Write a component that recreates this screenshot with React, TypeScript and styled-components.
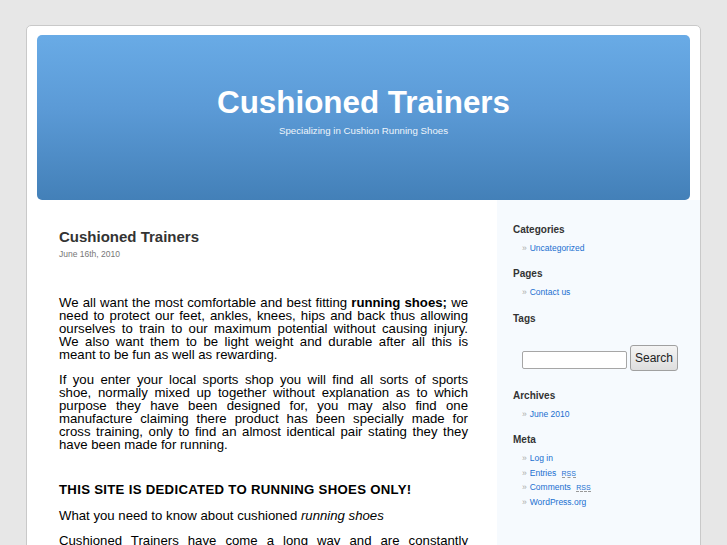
import styled, { createGlobalStyle } from "styled-components";

const GlobalStyle = createGlobalStyle`
  html, body {
    margin: 0;
    padding: 0;
    background: #e7e7e7;
    font-family: "Liberation Sans", Arial, sans-serif;
    color: #333;
  }
  body {
    padding-top: 25px;
    overflow: hidden;
  }
`;

const Page = styled.div`
  width: 673px;
  margin: 0 auto;
  background: #fff;
  border: 1px solid #c9c9c9;
  border-radius: 5px;
  overflow: hidden;
  min-height: 600px;
  display: flex;
  flex-direction: column;
`;

const Header = styled.header`
  margin: 9px 10px 0 10px;
  height: 165px;
  border-radius: 5px;
  background: linear-gradient(180deg, #69abe6 0%, #5b9ad6 45%, #4380b8 100%);
  display: flex;
  flex-direction: column;
  align-items: center;
  color: #fff;
`;

const SiteTitle = styled.h1`
  margin: 51px 0 0 0;
  font-size: 31.4px;
  line-height: 34px;
  font-weight: bold;
`;

const SiteDescription = styled.div`
  margin-top: 5px;
  font-size: 9.7px;
  line-height: 12px;
  color: #eef4fb;
`;

const Body = styled.div`
  display: flex;
  flex: 1;
`;

const Main = styled.main`
  width: 409px;
  padding: 28px 29px 0 32px;
`;

const PostTitle = styled.h2`
  margin: 0;
  font-size: 15px;
  line-height: 18px;
  font-weight: bold;
  color: #333;
`;

const PostDate = styled.small`
  display: block;
  margin-top: 3px;
  font-size: 8.5px;
  line-height: 10px;
  color: #777;
`;

const Entry = styled.div`
  margin-top: 37px;
  color: #000;
  font-size: 13.2px;
  line-height: 13px;
`;

const Para = styled.p<{ $gap?: number }>`
  margin: ${(p) => p.$gap ?? 12}px 0 0 0;
`;

// one rendered line of a justified paragraph, so the breaks stay where they are
const Line = styled.span<{ $last?: boolean }>`
  display: block;
  white-space: nowrap;
  text-align: ${(p) => (p.$last ? "left" : "justify")};
  text-align-last: ${(p) => (p.$last ? "left" : "justify")};
`;

const Shout = styled.h3`
  margin: 32px 0 0 0;
  font-size: 13.2px;
  line-height: 13px;
  letter-spacing: 0.3px;
  font-weight: bold;
  color: #000;
`;

const Sidebar = styled.aside`
  flex: 1;
  background: #f6fafe;
  padding: 24px 16px 0 16px;
`;

const WidgetTitle = styled.h2<{ $top?: number }>`
  margin: ${(p) => p.$top ?? 0}px 0 0 0;
  font-size: 10px;
  line-height: 12px;
  font-weight: bold;
  color: #333;
`;

const List = styled.ul`
  list-style: none;
  margin: 5px 0 0 9px;
  padding: 0;
`;

const Item = styled.li`
  font-size: 8.5px;
  line-height: 14.7px;
  height: 14.7px;
  color: #999;
  &::before {
    content: "»";
    margin-right: 3px;
    color: #aaa;
  }
`;

const Link = styled.a`
  color: #1a6fd0;
  text-decoration: none;
`;

const Abbr = styled.abbr`
  font-size: 7px;
  line-height: 1;
  text-decoration: none;
  border-bottom: 1px dashed #999;
  margin-left: 3px;
`;

const SearchForm = styled.form`
  display: flex;
  align-items: flex-end;
  gap: 3px;
  margin: 20px 0 0 9px;
`;

const SearchInput = styled.input`
  box-sizing: border-box;
  width: 105px;
  height: 18px;
  margin-bottom: 2px;
  border: 1px solid #a6a6a6;
  border-radius: 2px;
  background: #fff;
  padding: 0 3px;
`;

const SearchButton = styled.button`
  box-sizing: border-box;
  width: 48px;
  height: 26px;
  border: 1px solid #a0a0a0;
  border-radius: 3px;
  background: linear-gradient(180deg, #f4f4f4 0%, #dedede 100%);
  font-family: "Liberation Sans", Arial, sans-serif;
  font-size: 12px;
  color: #222;
  padding: 0;
`;

export default function App() {
  return (
    <>
      <GlobalStyle />
      <Page>
        <Header>
          <SiteTitle>Cushioned Trainers</SiteTitle>
          <SiteDescription>Specializing in Cushion Running Shoes</SiteDescription>
        </Header>
        <Body>
          <Main>
            <PostTitle>Cushioned Trainers</PostTitle>
            <PostDate>June 16th, 2010</PostDate>
            <Entry>
              <Para $gap={0}>
                <Line>We all want the most comfortable and best fitting <strong>running shoes;</strong> we</Line>
                <Line>need to protect our feet, ankles, knees, hips and back thus allowing</Line>
                <Line>ourselves to train to our maximum potential without causing injury.</Line>
                <Line>We also want them to be light weight and durable after all this is</Line>
                <Line $last>meant to be fun as well as rewarding.</Line>
              </Para>
              <Para>
                <Line>If you enter your local sports shop you will find all sorts of sports</Line>
                <Line>shoe, normally mixed up together without explanation as to which</Line>
                <Line>purpose they have been designed for, you may also find one</Line>
                <Line>manufacture claiming there product has been specially made for</Line>
                <Line>cross training, only to find an almost identical pair stating they they</Line>
                <Line $last>have been made for running.</Line>
              </Para>
              <Shout>THIS SITE IS DEDICATED TO RUNNING SHOES ONLY!</Shout>
              <Para $gap={13}>
                <Line $last>What you need to know about cushioned <em>running shoes</em></Line>
              </Para>
              <Para>
                <Line>Cushioned Trainers have come a long way and are constantly</Line>
                <Line $last>being improved by the manufacturers.</Line>
              </Para>
            </Entry>
          </Main>
          <Sidebar>
            <WidgetTitle>Categories</WidgetTitle>
            <List>
              <Item><Link href="#">Uncategorized</Link></Item>
            </List>
            <WidgetTitle $top={12}>Pages</WidgetTitle>
            <List>
              <Item><Link href="#">Contact us</Link></Item>
            </List>
            <WidgetTitle $top={14}>Tags</WidgetTitle>
            <SearchForm onSubmit={(e) => e.preventDefault()}>
              <SearchInput type="text" />
              <SearchButton type="submit">Search</SearchButton>
            </SearchForm>
            <WidgetTitle $top={19}>Archives</WidgetTitle>
            <List>
              <Item><Link href="#">June 2010</Link></Item>
            </List>
            <WidgetTitle $top={12}>Meta</WidgetTitle>
            <List>
              <Item><Link href="#">Log in</Link></Item>
              <Item><Link href="#">Entries <Abbr title="Really Simple Syndication">RSS</Abbr></Link></Item>
              <Item><Link href="#">Comments <Abbr title="Really Simple Syndication">RSS</Abbr></Link></Item>
              <Item><Link href="#">WordPress.org</Link></Item>
            </List>
          </Sidebar>
        </Body>
      </Page>
    </>
  );
}
